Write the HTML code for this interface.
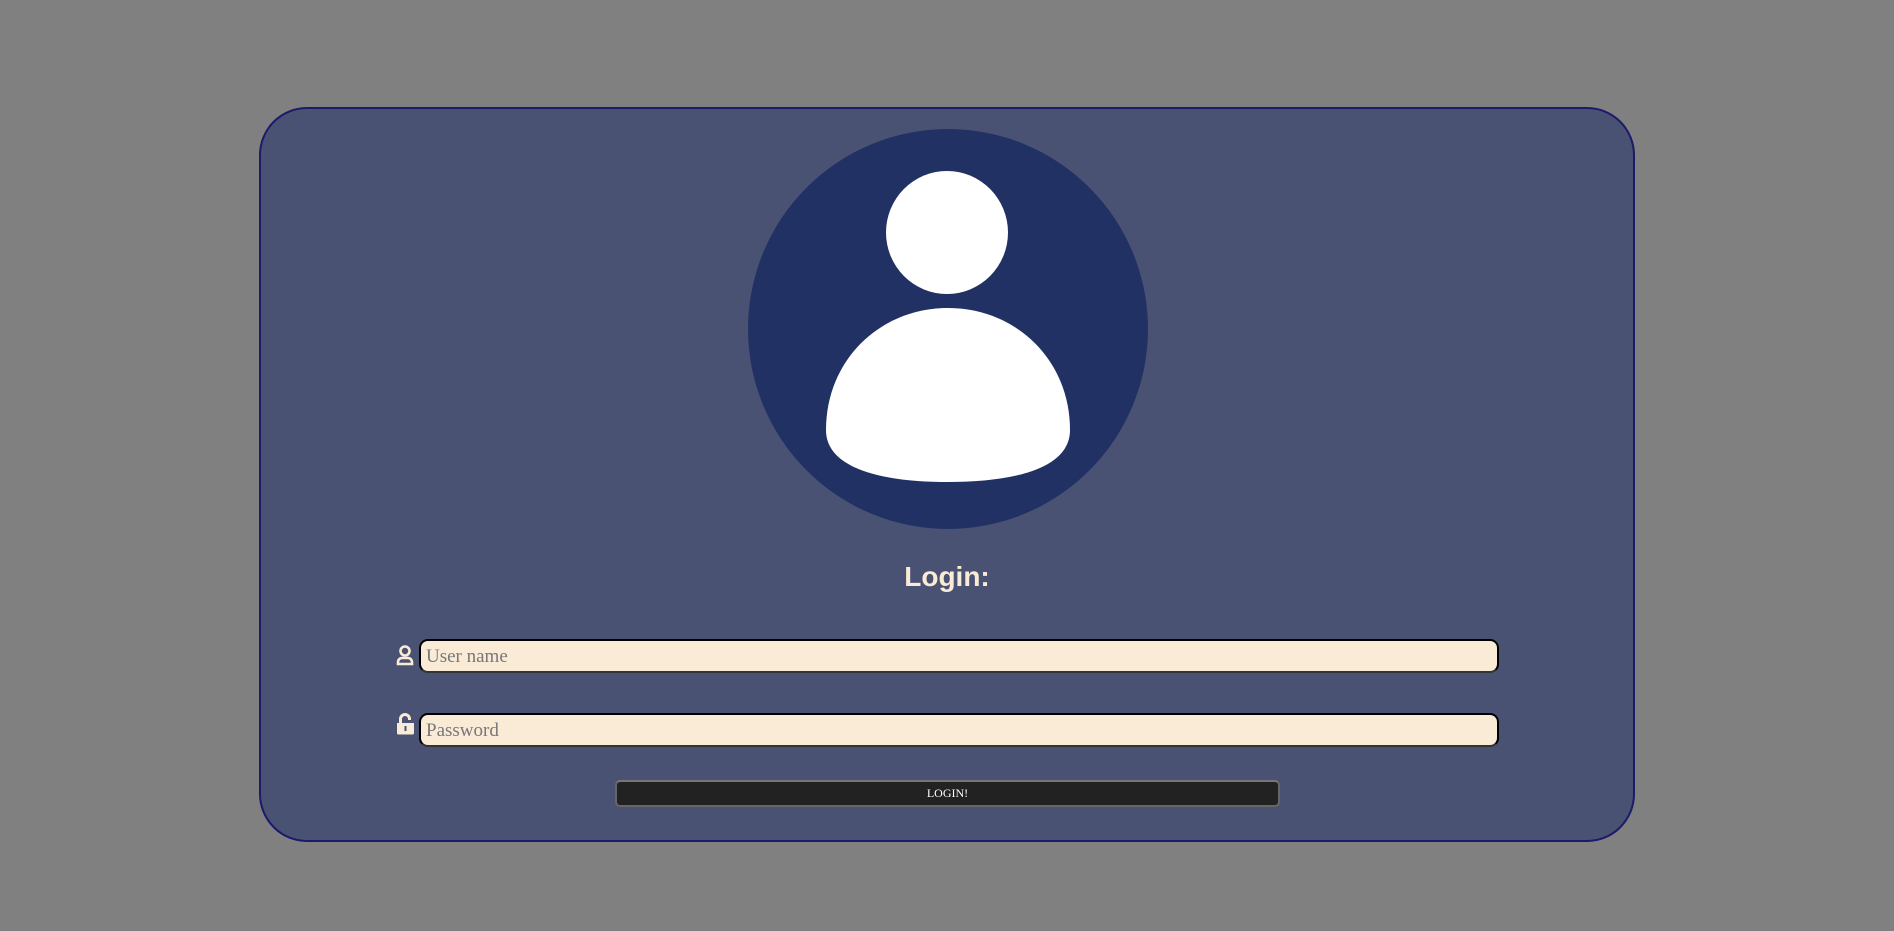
<!DOCTYPE html>
<html><head><meta charset="utf-8"><style>
*{box-sizing:border-box;margin:0;padding:0}
body{width:1894px;height:931px;background:#808080;position:relative;overflow:hidden;font-family:"Liberation Serif",serif}
.card{position:absolute;left:259px;top:107px;width:1376px;height:735px;background:#4a5273;border:2px solid #1c1a6a;border-radius:48px}
.circ{position:absolute;left:748px;top:129px;width:400px;height:400px;border-radius:50%;background:#213163}
.title{position:absolute;left:0;width:1894px;top:561px;text-align:center;font:bold 28px "Liberation Sans",sans-serif;color:#faebd7}
.inp{position:absolute;left:419px;width:1080px;height:34px;background:#faebd7;border:2px solid #000;border-bottom-color:#333;border-radius:9px;font-size:19px;color:#777;padding:5px 0 0 5px}
.btn{position:absolute;left:615px;top:780px;width:665px;height:27px;background:#222;border:2px solid #666;border-top-color:#777;border-radius:5px;color:#fff;font-size:12px;text-align:center;line-height:22px}
</style></head><body>
<div class="card"></div>
<div class="circ"></div>
<svg style="position:absolute;left:0;top:0" width="1894" height="931">
<ellipse cx="947" cy="232.5" rx="61" ry="61.5" fill="#fff"/>
<path d="M826 430 C826 360 880 308 948 308 C1016 308 1070 360 1070 430 C1070 470 1010 482 948 482 C886 482 826 470 826 430 Z" fill="#fff"/>
<g fill="none" stroke="#faebd7" stroke-width="2.6">
<circle cx="405" cy="651" r="4.5"/>
<path d="M398 664 v-2 a4 4 0 0 1 4 -4 h6 a4 4 0 0 1 4 4 v2 z"/>
</g>
<g fill="#faebd7">
<path d="M397 723 h17 v10 a1.5 1.5 0 0 1 -1.5 1.5 h-14 a1.5 1.5 0 0 1 -1.5 -1.5z"/>
<path d="M400.5 723 v-4 a4.5 4.5 0 0 1 9 0 v1" fill="none" stroke="#faebd7" stroke-width="3"/>
<rect x="404.5" y="726" width="2" height="5" fill="#4a5273"/>
</g>
</svg>
<div class="title">Login:</div>
<div class="inp" style="top:639px">User name</div>
<div class="inp" style="top:713px">Password</div>
<div class="btn">LOGIN!</div>
</body></html>
